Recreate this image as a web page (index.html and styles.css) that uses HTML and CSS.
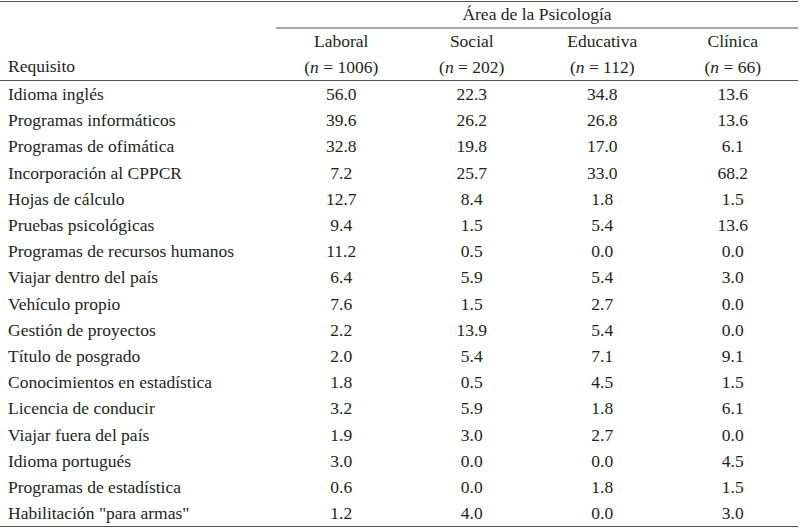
FILE: index.html
```html
<!DOCTYPE html>
<html lang="es">
<head>
<meta charset="utf-8">
<link rel="stylesheet" href="styles.css">
</head>
<body>
<table class="tbl">
  <colgroup>
    <col class="c-req">
    <col class="c-num">
    <col class="c-num">
    <col class="c-num">
    <col class="c-num">
  </colgroup>
  <thead>
    <tr class="h-top">
      <th></th>
      <th colspan="4" class="area">Área de la Psicología</th>
    </tr>
    <tr class="h-sub">
      <th class="req"><span class="blank">&nbsp;</span><br>Requisito</th>
      <th>Laboral<br>(<i>n</i> = 1006)</th>
      <th>Social<br>(<i>n</i> = 202)</th>
      <th>Educativa<br>(<i>n</i> = 112)</th>
      <th>Clínica<br>(<i>n</i> = 66)</th>
    </tr>
  </thead>
  <tbody>
    <tr><td>Idioma inglés</td><td>56.0</td><td>22.3</td><td>34.8</td><td>13.6</td></tr>
    <tr><td>Programas informáticos</td><td>39.6</td><td>26.2</td><td>26.8</td><td>13.6</td></tr>
    <tr><td>Programas de ofimática</td><td>32.8</td><td>19.8</td><td>17.0</td><td>6.1</td></tr>
    <tr><td>Incorporación al CPPCR</td><td>7.2</td><td>25.7</td><td>33.0</td><td>68.2</td></tr>
    <tr><td>Hojas de cálculo</td><td>12.7</td><td>8.4</td><td>1.8</td><td>1.5</td></tr>
    <tr><td>Pruebas psicológicas</td><td>9.4</td><td>1.5</td><td>5.4</td><td>13.6</td></tr>
    <tr><td>Programas de recursos humanos</td><td>11.2</td><td>0.5</td><td>0.0</td><td>0.0</td></tr>
    <tr><td>Viajar dentro del país</td><td>6.4</td><td>5.9</td><td>5.4</td><td>3.0</td></tr>
    <tr><td>Vehículo propio</td><td>7.6</td><td>1.5</td><td>2.7</td><td>0.0</td></tr>
    <tr><td>Gestión de proyectos</td><td>2.2</td><td>13.9</td><td>5.4</td><td>0.0</td></tr>
    <tr><td>Título de posgrado</td><td>2.0</td><td>5.4</td><td>7.1</td><td>9.1</td></tr>
    <tr><td>Conocimientos en estadística</td><td>1.8</td><td>0.5</td><td>4.5</td><td>1.5</td></tr>
    <tr><td>Licencia de conducir</td><td>3.2</td><td>5.9</td><td>1.8</td><td>6.1</td></tr>
    <tr><td>Viajar fuera del país</td><td>1.9</td><td>3.0</td><td>2.7</td><td>0.0</td></tr>
    <tr><td>Idioma portugués</td><td>3.0</td><td>0.0</td><td>0.0</td><td>4.5</td></tr>
    <tr><td>Programas de estadística</td><td>0.6</td><td>0.0</td><td>1.8</td><td>1.5</td></tr>
    <tr><td>Habilitación "para armas"</td><td>1.2</td><td>4.0</td><td>0.0</td><td>3.0</td></tr>
  </tbody>
</table>
</body>
</html>
```

FILE: styles.css
```css
html, body {
  margin: 0;
  padding: 0;
  background: #ffffff;
}

body {
  padding-top: 1px;
  font-family: "Liberation Serif", "Times New Roman", Times, "DejaVu Serif", serif;
}

.tbl {
  width: 798px;
  border-collapse: collapse;
  table-layout: fixed;
  font-family: "Liberation Serif", "Times New Roman", Times, "DejaVu Serif", serif;
  font-size: 17.5px;
  color: #231f20;
  border-top: 1px solid #555555;
  border-bottom: 1px solid #555555;
}

.c-req { width: 276px; }
.c-num { width: 130.5px; }

.tbl th {
  font-family: inherit;
  font-weight: normal;
  text-align: center;
  padding: 0;
}

.tbl i {
  font-style: italic;
}

.h-top th {
  height: 25px;
  line-height: 25px;
}

.area {
  border-bottom: 2px solid #a8a8a8;
}

.h-sub th {
  padding: 0;
  line-height: 25.5px;
  border-bottom: 1px solid #555555;
}

.tbl th.req {
  text-align: left;
  padding-left: 8px;
}

.blank {
  visibility: hidden;
}

.tbl td {
  font-family: inherit;
  height: 26.2px;
  padding: 0;
  line-height: 26px;
  text-align: center;
}

.tbl td:first-child {
  text-align: left;
  padding-left: 8px;
}
```
